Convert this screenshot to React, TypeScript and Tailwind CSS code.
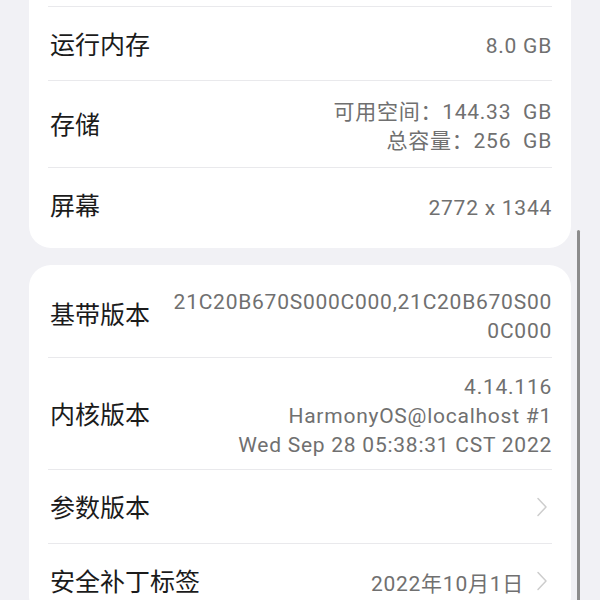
type Row = { label: string; lines?: string[]; arrow?: boolean; pad?: string };

const cardOne: Row[] = [
  { label: "运行内存", lines: ["8.0 GB"] },
  { label: "存储", lines: ["可用空间：144.33  GB", "总容量：256  GB"] },
  { label: "屏幕", lines: ["2772 x 1344"] },
];

const cardTwo: Row[] = [
  { label: "基带版本", lines: ["21C20B670S000C000,21C20B670S00", "0C000"] },
  { label: "内核版本", lines: ["4.14.116", "HarmonyOS@localhost #1", "Wed Sep 28 05:38:31 CST 2022"], pad: "py-[12px]" },
  { label: "参数版本", arrow: true },
  { label: "安全补丁标签", lines: ["2022年10月1日"], arrow: true },
];

function Chevron() {
  return (
    <svg width="12" height="20" viewBox="0 0 12 20" fill="none" className="shrink-0">
      <path d="M2 1.5 L10 10 L2 18.5" stroke="#cdcdcd" strokeWidth="1.5" strokeLinecap="round" strokeLinejoin="round" />
    </svg>
  );
}

function InfoRow({ row, last }: { row: Row; last: boolean }) {
  return (
    <div
      className={`flex items-center justify-between min-h-[74px] ${row.pad ?? "py-[14px]"} ${last ? "" : "border-b border-[#e9e9ec]"}`}
    >
      <div className="text-[25px] text-[#1b1b1b] shrink-0 pl-[2px]">{row.label}</div>
      <div className={`flex items-center gap-[12px] ${row.arrow ? "pr-[4px]" : "pr-0"}`}>
        {row.lines && (
          <div className="text-right text-[21px] leading-[29px] text-[#707070] whitespace-pre font-['Roboto','Noto_Sans_CJK_SC',sans-serif] tracking-[0.75px] translate-y-[3px]">
            {row.lines.map((l) => (
              <div key={l}>{l}</div>
            ))}
          </div>
        )}
        {row.arrow && <Chevron />}
      </div>
    </div>
  );
}

export default function App() {
  return (
    <div className="relative w-[600px] h-[600px] overflow-hidden bg-[#f1f1f5] font-['Noto_Sans_CJK_SC','Noto_Sans',sans-serif]">
      <div className="mt-[-67px] flex flex-col gap-[17px]">
        <div className="mx-[29px] bg-white rounded-[22px] px-[19px] pb-[6px]">
          {/* row above, scrolled out of view */}
          <div className="h-[74px] border-b border-[#e9e9ec]" />
          {cardOne.map((r, i) => (
            <InfoRow key={r.label} row={r} last={i === cardOne.length - 1} />
          ))}
        </div>
        <div className="mx-[29px] bg-white rounded-[22px] px-[19px] pt-[6px]">
          {cardTwo.map((r, i) => (
            <InfoRow key={r.label} row={r} last={i === cardTwo.length - 1} />
          ))}
        </div>
      </div>
      {/* scroll indicator */}
      <div className="absolute left-[577px] top-[230px] w-[3px] h-[380px] rounded-full bg-[#8c8c8c]" />
    </div>
  );
}
